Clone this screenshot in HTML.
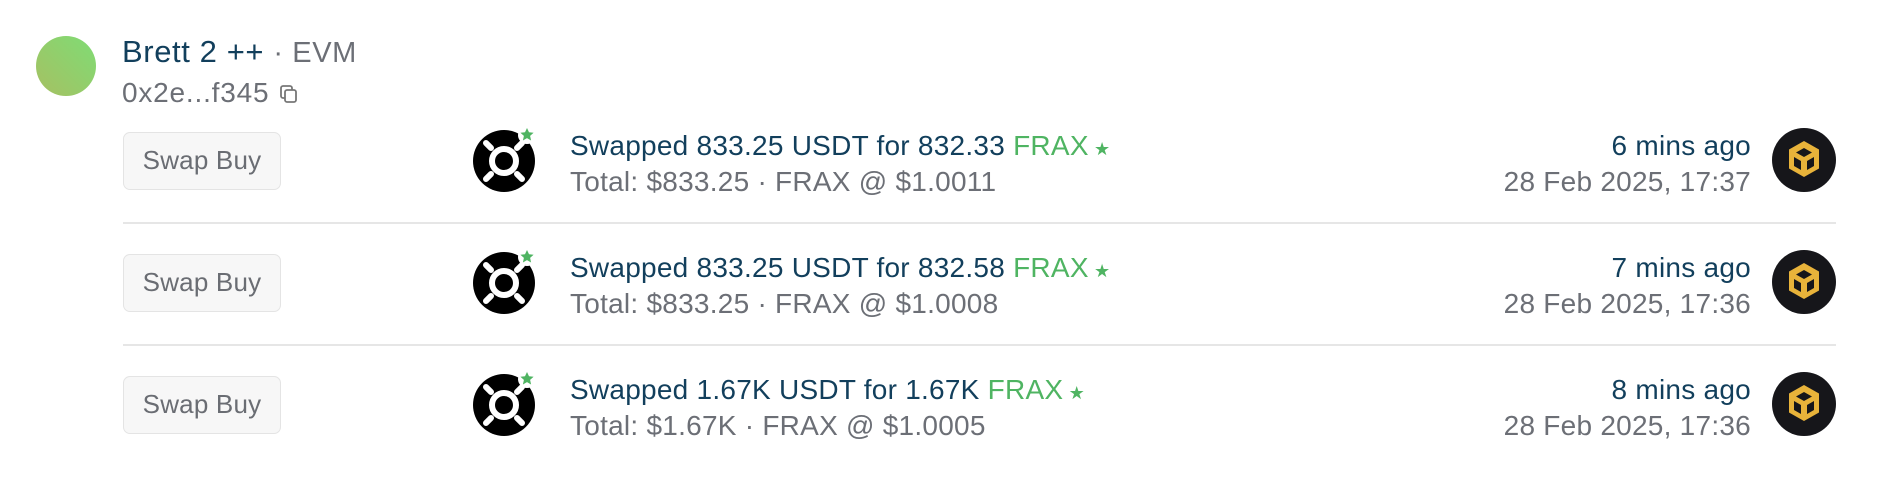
<!DOCTYPE html>
<html><head><meta charset="utf-8"><style>
*{margin:0;padding:0;box-sizing:border-box}
body{width:1890px;height:480px;background:#fff;font-family:"Liberation Sans",sans-serif;position:relative;overflow:hidden}
.a{position:absolute;white-space:nowrap}
.d{color:#123f5c}
.g{color:#6c6f76}
.gr{color:#4fb462}
.btn{position:absolute;left:123px;width:158px;height:58px;border:1.5px solid #e4e4e4;border-radius:7px;background:#f7f7f7;color:#6a6d73;font-size:26px;line-height:55px;text-align:center;letter-spacing:0.2px}
.sep{position:absolute;left:123px;width:1713px;height:2px;background:#e6e6e6}
.t{font-size:28px;line-height:34px;letter-spacing:0.25px}
</style></head><body>
<div class="a" style="left:36px;top:36px;width:60px;height:60px;border-radius:50%;background:linear-gradient(225deg,#7fdc75,#a6c062)"></div>
<div class="a d" style="left:122px;top:34px;font-size:31px;letter-spacing:0.6px">Brett 2 ++ <span class="g" style="font-size:29px">· EVM</span></div>
<div class="a g" style="left:122px;top:77px;font-size:28px;letter-spacing:0.8px">0x2e...f345 <svg width="22" height="22" viewBox="0 0 22 22" style="vertical-align:-3px"><rect x="3" y="3" width="11" height="12" rx="2" fill="none" stroke="#777" stroke-width="1.8"/><rect x="7" y="7" width="11" height="12" rx="2" fill="#fff" stroke="#777" stroke-width="1.8"/></svg></div>

<div class="btn" style="top:132px">Swap Buy</div>
<div class="btn" style="top:254px">Swap Buy</div>
<div class="btn" style="top:376px">Swap Buy</div>

<div class="sep" style="top:222px"></div>
<div class="sep" style="top:344px"></div>

<svg class="a" style="left:471px;top:124px" width="70" height="70" viewBox="0 0 70 70"><circle cx="33" cy="37" r="31" fill="#000"/><circle cx="33" cy="37" r="12" fill="none" stroke="#fff" stroke-width="6"/><g stroke="#fff" stroke-width="6" stroke-linecap="round"><path d="M20 24l-5-5M46 24l5-5M20 50l-5 5M46 50l5 5"/></g><circle cx="56" cy="11" r="9" fill="#fff"/><path d="M56 4l2 4.3 4.6.5-3.5 3.1 1 4.6-4.1-2.4-4.1 2.4 1-4.6-3.5-3.1 4.6-.5z" fill="#4fb462"/></svg>
<svg class="a" style="left:471px;top:246px" width="70" height="70" viewBox="0 0 70 70"><circle cx="33" cy="37" r="31" fill="#000"/><circle cx="33" cy="37" r="12" fill="none" stroke="#fff" stroke-width="6"/><g stroke="#fff" stroke-width="6" stroke-linecap="round"><path d="M20 24l-5-5M46 24l5-5M20 50l-5 5M46 50l5 5"/></g><circle cx="56" cy="11" r="9" fill="#fff"/><path d="M56 4l2 4.3 4.6.5-3.5 3.1 1 4.6-4.1-2.4-4.1 2.4 1-4.6-3.5-3.1 4.6-.5z" fill="#4fb462"/></svg>
<svg class="a" style="left:471px;top:368px" width="70" height="70" viewBox="0 0 70 70"><circle cx="33" cy="37" r="31" fill="#000"/><circle cx="33" cy="37" r="12" fill="none" stroke="#fff" stroke-width="6"/><g stroke="#fff" stroke-width="6" stroke-linecap="round"><path d="M20 24l-5-5M46 24l5-5M20 50l-5 5M46 50l5 5"/></g><circle cx="56" cy="11" r="9" fill="#fff"/><path d="M56 4l2 4.3 4.6.5-3.5 3.1 1 4.6-4.1-2.4-4.1 2.4 1-4.6-3.5-3.1 4.6-.5z" fill="#4fb462"/></svg>

<div class="a t d" style="left:570px;top:129px">Swapped 833.25 USDT for 832.33 <span class="gr">FRAX</span><span class="gr" style="font-size:18px"> ★</span></div>
<div class="a t g" style="left:570px;top:165px">Total: $833.25 · FRAX @ $1.0011</div>
<div class="a t d" style="left:570px;top:251px">Swapped 833.25 USDT for 832.58 <span class="gr">FRAX</span><span class="gr" style="font-size:18px"> ★</span></div>
<div class="a t g" style="left:570px;top:287px">Total: $833.25 · FRAX @ $1.0008</div>
<div class="a t d" style="left:570px;top:373px">Swapped 1.67K USDT for 1.67K <span class="gr">FRAX</span><span class="gr" style="font-size:18px"> ★</span></div>
<div class="a t g" style="left:570px;top:409px">Total: $1.67K · FRAX @ $1.0005</div>

<div class="a t d" style="right:139px;top:129px;text-align:right">6 mins ago</div>
<div class="a t g" style="right:139px;top:165px;text-align:right">28 Feb 2025, 17:37</div>
<div class="a t d" style="right:139px;top:251px;text-align:right">7 mins ago</div>
<div class="a t g" style="right:139px;top:287px;text-align:right">28 Feb 2025, 17:36</div>
<div class="a t d" style="right:139px;top:373px;text-align:right">8 mins ago</div>
<div class="a t g" style="right:139px;top:409px;text-align:right">28 Feb 2025, 17:36</div>

<svg class="a" style="left:1772px;top:128px" width="64" height="64" viewBox="0 0 64 64"><circle cx="32" cy="32" r="32" fill="#16161a"/><path d="M32 13l15 8.5v19L32 49 17 40.5v-19z" fill="#e8b33a"/><path d="M32 20l8 4.5-8 4.5-8-4.5zM22 29l7 4v9l-7-4zM42 29l-7 4v9l7-4z" fill="#16161a"/></svg>
<svg class="a" style="left:1772px;top:250px" width="64" height="64" viewBox="0 0 64 64"><circle cx="32" cy="32" r="32" fill="#16161a"/><path d="M32 13l15 8.5v19L32 49 17 40.5v-19z" fill="#e8b33a"/><path d="M32 20l8 4.5-8 4.5-8-4.5zM22 29l7 4v9l-7-4zM42 29l-7 4v9l7-4z" fill="#16161a"/></svg>
<svg class="a" style="left:1772px;top:372px" width="64" height="64" viewBox="0 0 64 64"><circle cx="32" cy="32" r="32" fill="#16161a"/><path d="M32 13l15 8.5v19L32 49 17 40.5v-19z" fill="#e8b33a"/><path d="M32 20l8 4.5-8 4.5-8-4.5zM22 29l7 4v9l-7-4zM42 29l-7 4v9l7-4z" fill="#16161a"/></svg>
</body></html>
